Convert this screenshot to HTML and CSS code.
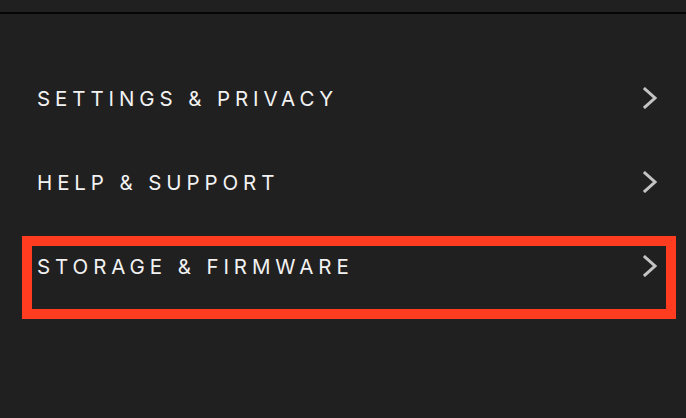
FILE: index.html
```html
<!DOCTYPE html>
<html>
<head>
<meta charset="utf-8">
<link rel="stylesheet" href="styles.css">
</head>
<body>
<div class="topbar"></div>
<div class="divider"></div>
<ul class="menu">
  <li class="row">
    <span class="label">SETTINGS &amp; PRIVACY</span>
    <svg class="chev" width="14" height="22" viewBox="0 0 14 22"><polyline points="2,2 12,11 2,20" fill="none" stroke="#c4c4c4" stroke-width="3" stroke-linecap="square"/></svg>
  </li>
  <li class="row">
    <span class="label">HELP &amp; SUPPORT</span>
    <svg class="chev" width="14" height="22" viewBox="0 0 14 22"><polyline points="2,2 12,11 2,20" fill="none" stroke="#c4c4c4" stroke-width="3" stroke-linecap="square"/></svg>
  </li>
  <li class="row">
    <span class="label">STORAGE &amp; FIRMWARE</span>
    <svg class="chev" width="14" height="22" viewBox="0 0 14 22"><polyline points="2,2 12,11 2,20" fill="none" stroke="#c4c4c4" stroke-width="3" stroke-linecap="square"/></svg>
    <div class="highlight"></div>
  </li>
</ul>
</body>
</html>
```
FILE: styles.css
```css
html, body {
  margin: 0;
  padding: 0;
  background: #202020;
  height: 100%;
  overflow: hidden;
}
.topbar {
  height: 12px;
  background: #202020;
}
.divider {
  height: 2px;
  background: #050505;
}
.menu {
  list-style: none;
  margin: 42px 0 0 0;
  padding: 0;
}
.row {
  position: relative;
  height: 84px;
  display: flex;
  align-items: center;
  justify-content: space-between;
  padding: 0 29px 0 37px;
}
.label {
  font-family: Inter, "Open Sans", sans-serif;
  font-size: 20.5px;
  letter-spacing: 4.9px;
  color: #f2f2f2;
  font-weight: 400;
}
.chev {
  display: block;
}
.highlight {
  position: absolute;
  left: 22px;
  right: 10px;
  top: 12px;
  height: 83px;
  box-sizing: border-box;
  border: 10px solid #ff3b20;
}
```
